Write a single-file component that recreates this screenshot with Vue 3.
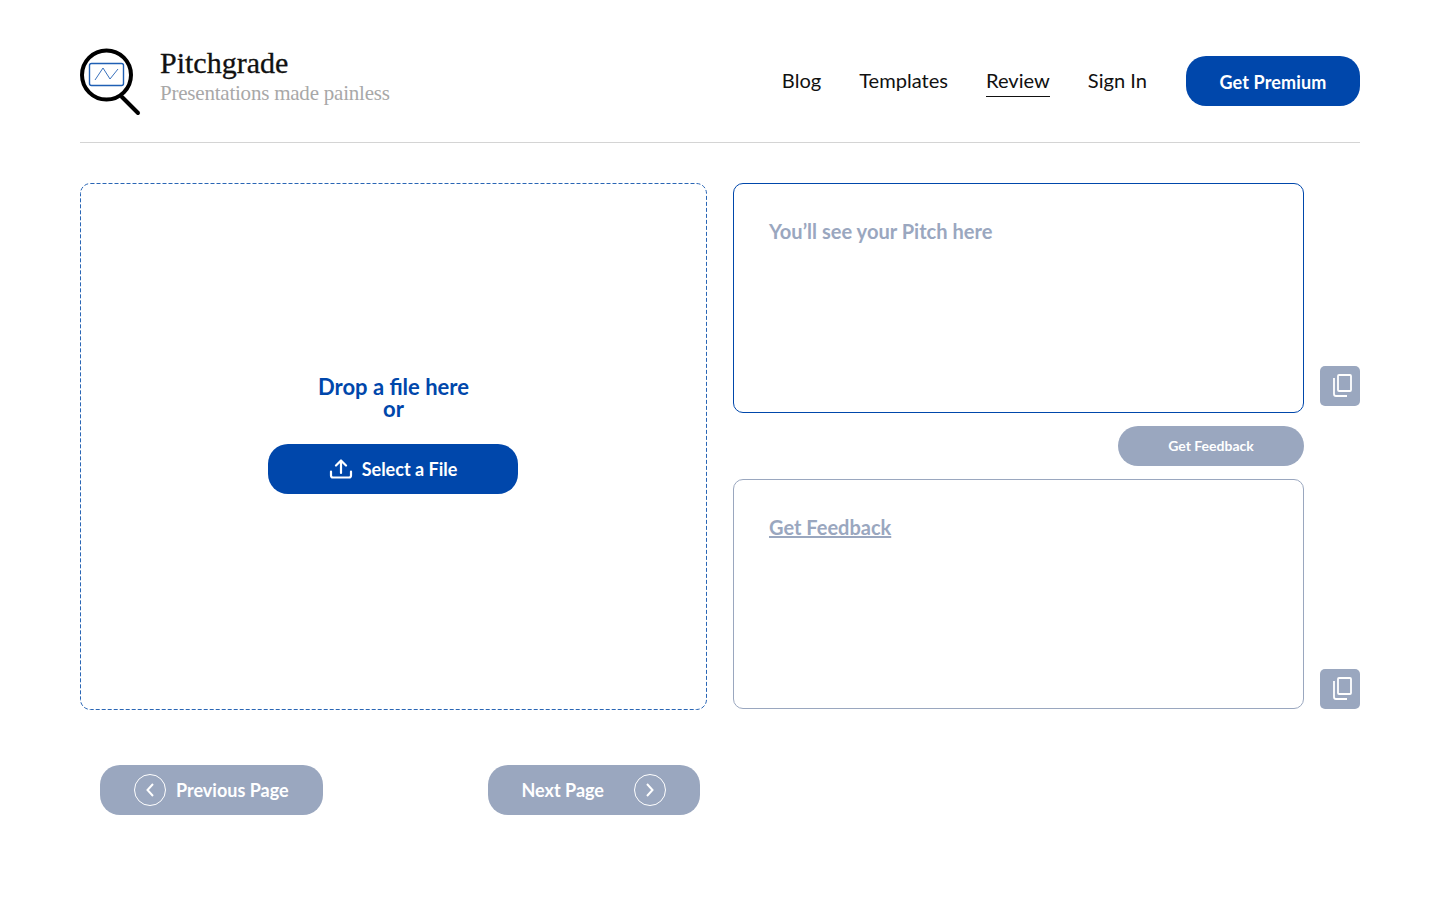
<script setup>
const navItems = [
  { label: 'Blog', active: false },
  { label: 'Templates', active: false },
  { label: 'Review', active: true },
  { label: 'Sign In', active: false },
]
</script>

<template>
  <div class="page">
    <header class="header">
      <div class="brand">
        <svg class="logo" width="62" height="70" viewBox="0 0 62 70" fill="none">
          <rect x="9.5" y="15.5" width="34" height="22" rx="2" stroke="#1f5fb4" stroke-width="1.4" />
          <path d="M15 32 L23 20 L30 31 L38 21" stroke="#3a72bd" stroke-width="1" />
          <circle cx="26.5" cy="27" r="24.500" stroke="#000" stroke-width="4" />
          <path d="M42 49 L58 65" stroke="#000" stroke-width="4" stroke-linecap="round" />
        </svg>
        <div class="brand-text">
          <div class="brand-name">Pitchgrade</div>
          <div class="brand-tag">Presentations made painless</div>
        </div>
      </div>
      <nav class="nav">
        <a v-for="item in navItems" :key="item.label" class="nav-link" :class="{ active: item.active }">{{ item.label }}</a>
        <button class="premium">Get Premium</button>
      </nav>
    </header>

    <main class="main">
      <section class="drop">
        <svg class="drop-border" width="627" height="527" fill="none">
          <rect x="0.5" y="0.5" width="626" height="526" rx="10" stroke="#2a66b5" stroke-dasharray="4 2" />
        </svg>
        <div class="drop-title">Drop a file here<br />or</div>
        <button class="select">
          <svg width="24" height="20" viewBox="0 0 24 20" fill="none" stroke="#fff" stroke-width="2.200" stroke-linecap="round" stroke-linejoin="round">
            <path d="M2 12.500 V16.500 Q2 18.500 4 18.500 H20 Q22 18.500 22 16.500 V12.500" />
            <path d="M12 14 V2 M7 6.500 L12 1.500 L17 6.500" />
          </svg>
          <span>Select a File</span>
        </button>
      </section>

      <section class="right">
        <div class="row">
          <div class="panel pitch">You’ll see your Pitch here</div>
          <button class="copy copy-raised" aria-label="Copy">
            <svg width="24" height="26" viewBox="0 0 24 26" fill="none" stroke="#fff" stroke-width="1.800">
              <rect x="10" y="2" width="13" height="16" rx="1" />
              <path d="M6 5 V21 Q6 23 8 23 H19" />
            </svg>
          </button>
        </div>
        <div class="feedback-row">
          <button class="feedback">Get Feedback</button>
        </div>
        <div class="row">
          <div class="panel result"><span class="result-link">Get Feedback</span></div>
          <button class="copy" aria-label="Copy">
            <svg width="24" height="26" viewBox="0 0 24 26" fill="none" stroke="#fff" stroke-width="1.800">
              <rect x="10" y="2" width="13" height="16" rx="1" />
              <path d="M6 5 V21 Q6 23 8 23 H19" />
            </svg>
          </button>
        </div>
      </section>
    </main>

    <div class="pager">
      <button class="page-btn prev">
        <svg width="32" height="32" viewBox="0 0 32 32" fill="none" stroke="#fff">
          <circle cx="16" cy="16" r="15.500" />
          <path d="M19 10 L13.500 16 L19 22" stroke-width="2" />
        </svg>
        <span>Previous Page</span>
      </button>
      <button class="page-btn next">
        <span>Next Page</span>
        <svg width="32" height="32" viewBox="0 0 32 32" fill="none" stroke="#fff">
          <circle cx="16" cy="16" r="15.500" />
          <path d="M13 10 L18.500 16 L13 22" stroke-width="2" />
        </svg>
      </button>
    </div>
  </div>
</template>

<style>
html, body { background: #fff; }
</style>

<style scoped>
.page {
  box-sizing: border-box;
  height: 900px;
  padding: 0 80px;
  font-family: Lato, "Liberation Sans", sans-serif;
  overflow: hidden;
}
button { font-family: inherit; border: 0; cursor: pointer; padding: 0; }
.header {
  height: 143px;
  box-sizing: border-box;
  border-bottom: 1px solid #d4d4d4;
  display: flex;
  justify-content: space-between;
}
.brand { display: flex; align-items: flex-start; padding-top: 46px; }
.logo { margin-top: 2px; margin-right: 18px; flex: none; }
.brand-text { display: flex; flex-direction: column; }
.brand-name {
  font-family: "Liberation Serif", serif;
  font-size: 30px;
  line-height: 34px;
  color: #111;
  -webkit-text-stroke: 0.3px #111;
}
.brand-tag {
  font-family: "Liberation Serif", serif;
  font-size: 21px;
  line-height: 23px;
  margin-top: 2px;
  letter-spacing: -0.22px;
  color: #a8a8a8;
}
.nav { display: flex; align-items: center; height: 50px; margin-top: 56px; }
.nav-link {
  font-size: 20.1px;
  line-height: 24px;
  color: #111;
  margin-top: 2px;
  margin-right: 38px;
  padding-bottom: 4px;
  border-bottom: 1px solid transparent;
}
.nav-link.active { border-bottom-color: #111; }
.premium {
  width: 174px;
  height: 50px;
  margin-left: 1px;
  border-radius: 20px;
  background: #0047ab;
  color: #fff;
  font-size: 18px;
  font-weight: 700;
  letter-spacing: 0.15px;
  padding-top: 1px;
}
.main { display: flex; gap: 26px; margin-top: 40px; }
.drop {
  position: relative;
  box-sizing: border-box;
  width: 627px;
  height: 527px;
  display: flex;
  flex-direction: column;
  align-items: center;
  justify-content: center;
  padding-bottom: 24px;
}
.drop-border { position: absolute; inset: 0; }
.drop-title {
  color: #0047ab;
  font-size: 22px;
  font-weight: 700;
  line-height: 22.5px;
  text-align: center;
  margin-bottom: 23px;
}
.select {
  width: 250px;
  height: 50px;
  margin-right: 1px;
  border-radius: 20px;
  background: #0047ab;
  color: #fff;
  font-size: 18px;
  font-weight: 700;
  display: flex;
  align-items: center;
  justify-content: center;
  gap: 9px;
}
.right { display: flex; flex-direction: column; }
.row { display: flex; align-items: flex-end; gap: 16px; }
.panel {
  box-sizing: border-box;
  width: 571px;
  height: 230px;
  border-radius: 10px;
  padding: 34px 35px;
  font-size: 20.1px;
  font-weight: 700;
  line-height: 26px;
  color: #9aa7bf;
}
.pitch { border: 1px solid #0047ab; }
.result { border: 1px solid #9aa7bf; font-size: 20px; }
.result-link { text-decoration: underline; }
.copy {
  width: 40px;
  height: 40px;
  border-radius: 5px;
  background: #9aa7bf;
  display: flex;
  align-items: center;
  justify-content: center;
}
.copy-raised { margin-bottom: 7px; }
.feedback-row { width: 571px; display: flex; justify-content: flex-end; margin: 13px 0; }
.feedback {
  width: 186px;
  height: 40px;
  border-radius: 20px;
  background: #9aa7bf;
  color: #fff;
  font-size: 14px;
  font-weight: 700;
  padding-bottom: 2px;
}
.pager {
  width: 600px;
  margin: 55px 0 0 20px;
  display: flex;
  justify-content: space-between;
}
.page-btn {
  height: 50px;
  border-radius: 20px;
  background: #9aa7bf;
  color: #fff;
  font-size: 18px;
  font-weight: 700;
  display: flex;
  align-items: center;
  padding: 0 34px;
}
.prev { gap: 10px; }
.next { gap: 30px; }
</style>
